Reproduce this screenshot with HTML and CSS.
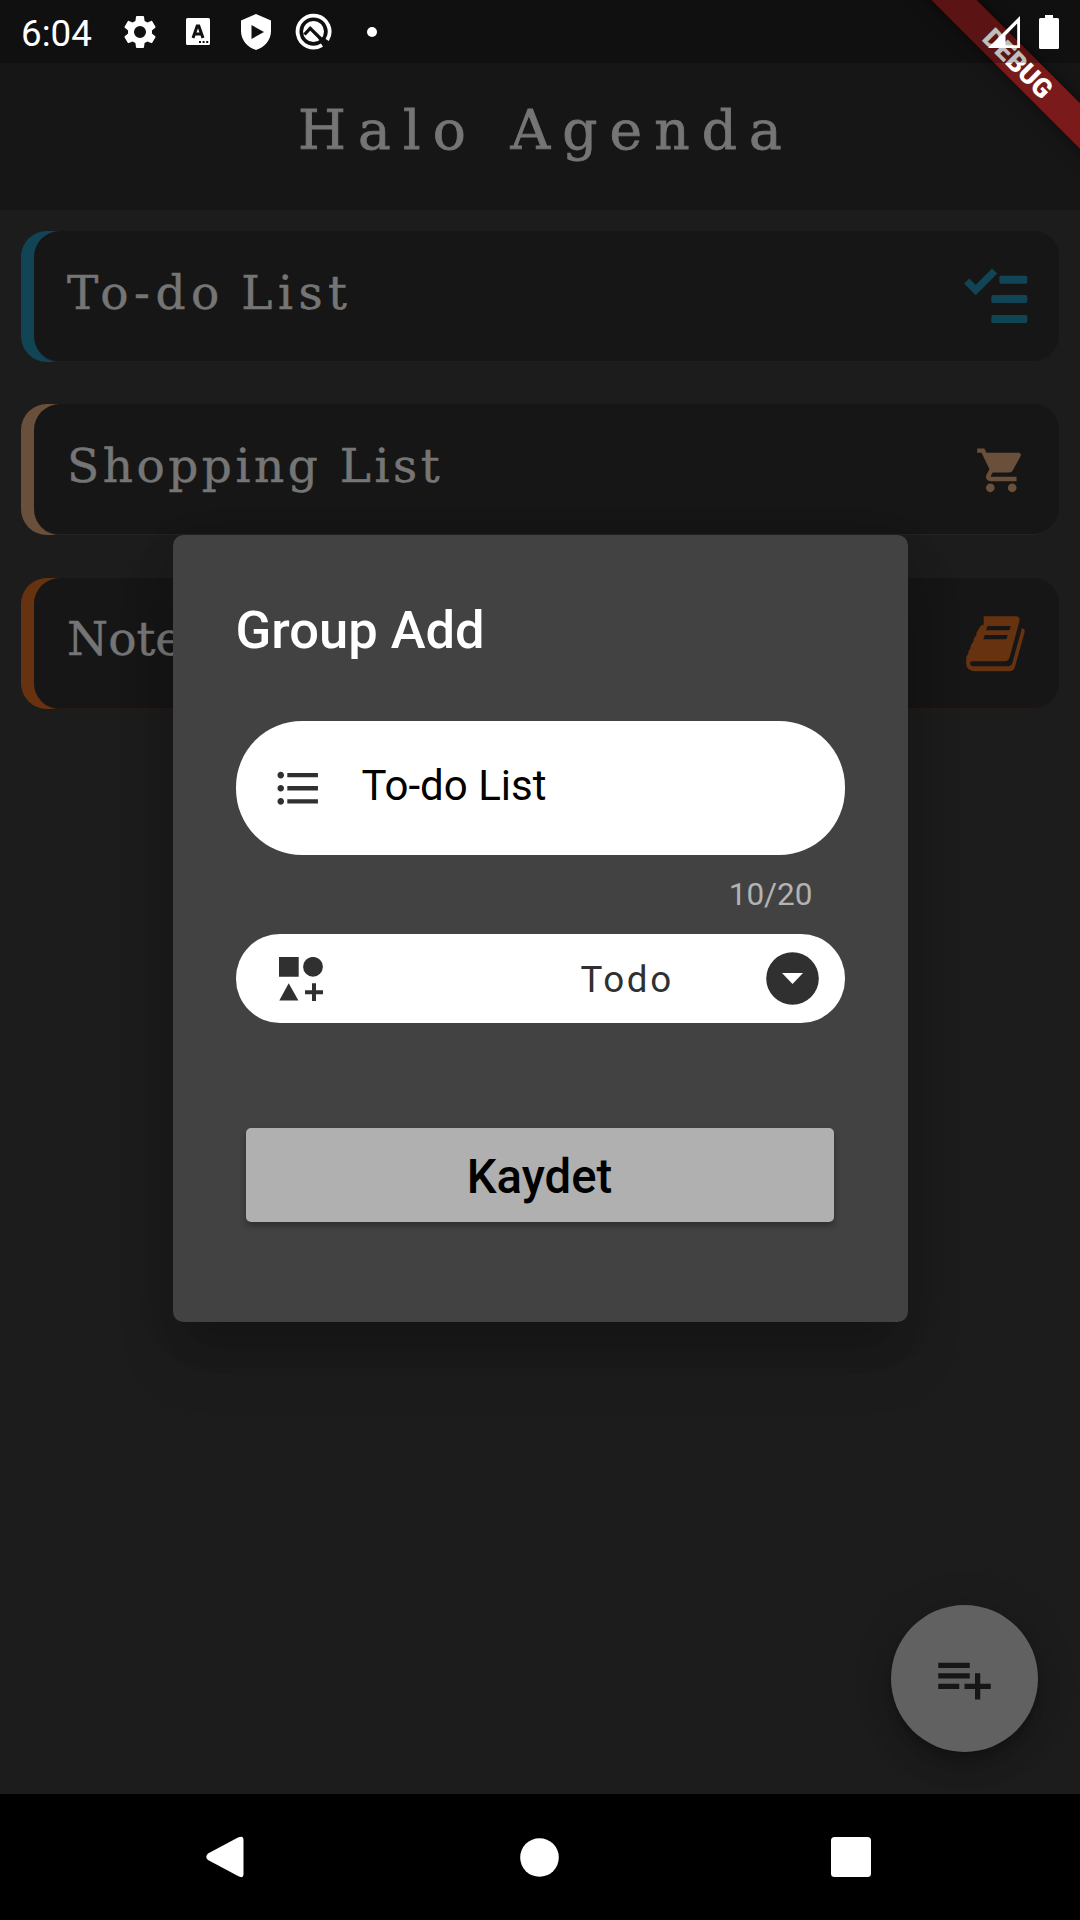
FILE: index.html
```html
<!DOCTYPE html>
<html lang="en">
<head>
<meta charset="utf-8">
<title>Halo Agenda</title>
<link rel="stylesheet" href="styles.css">
</head>
<body>
<div class="screen">
  <header class="statusbar">
    <span class="clock">6:04</span>
    <svg class="st-gear" width="40" height="40" viewBox="0 0 24 24"><path d="M19.14 12.94c.04-.3.06-.61.06-.94 0-.32-.02-.64-.07-.94l2.03-1.58c.18-.14.23-.41.12-.61l-1.92-3.32c-.12-.22-.37-.29-.59-.22l-2.39.96c-.5-.38-1.03-.7-1.62-.94l-.36-2.54c-.04-.24-.24-.41-.48-.41h-3.84c-.24 0-.43.17-.47.41l-.36 2.54c-.59.24-1.13.57-1.62.94l-2.39-.96c-.22-.08-.47 0-.59.22L2.74 8.87c-.12.21-.08.47.12.61l2.03 1.58c-.05.3-.09.63-.09.94s.02.64.07.94l-2.03 1.58c-.18.14-.23.41-.12.61l1.92 3.32c.12.22.37.29.59.22l2.39-.96c.5.38 1.03.7 1.62.94l.36 2.54c.05.24.24.41.48.41h3.84c.24 0 .44-.17.47-.41l.36-2.54c.59-.24 1.13-.56 1.62-.94l2.39.96c.22.08.47 0 .59-.22l1.92-3.32c.12-.22.07-.47-.12-.61l-2.01-1.58zM12 15.6A3.6 3.6 0 1 1 12 8.4a3.6 3.6 0 0 1 0 7.2z"/></svg>
    <svg class="st-kbd" width="24" height="27" viewBox="0 0 24 27"><rect width="24" height="27" rx="1.5"/><path d="M7 20 11.200 8h1.600L17 20M8.500 16h7" fill="none" stroke="#101010" stroke-width="3"/><path d="M13 23h2v2h-2zM16.600 23h2v2h-2zM20.200 23h2v2h-2z" fill="#101010"/></svg>
    <svg class="st-shield" width="30" height="36" viewBox="0 0 30 36"><path fill-rule="evenodd" d="M15 0 30 6.500V17c0 9-6.500 16.500-15 19C6.500 33.500 0 26 0 17V6.500zM10.500 11v14L23 18z"/></svg>
    <svg class="st-q" width="37" height="37" viewBox="0 0 37 37"><path d="M27 32.200A16 16 0 1 1 32.200 27" fill="none" stroke="#fff" stroke-width="3.800"/><circle cx="18.500" cy="18.500" r="10.500"/><path d="M9.500 21.500 15.200 15.300 27 27" fill="none" stroke="#101010" stroke-width="3.200"/><path d="M24 24.500 31 31.500" stroke="#101010" stroke-width="3"/></svg>
    <svg class="st-dot" width="10" height="10" viewBox="0 0 10 10"><circle cx="5" cy="5" r="5"/></svg>
    <svg class="st-signal" width="32" height="32" viewBox="0 0 32 32"><path fill-rule="evenodd" d="M32 0V32H0zM29.200 7.500 17.500 19.500V29.200H29.200z"/></svg>
    <svg class="st-battery" width="20" height="34" viewBox="0 0 20 34"><path d="M6 0h8v3h4.500A1.500 1.500 0 0 1 20 4.500v28a1.500 1.500 0 0 1-1.500 1.500h-17A1.500 1.500 0 0 1 0 32.500v-28A1.500 1.500 0 0 1 1.500 3H6z"/></svg>
  </header>
  <div class="appbar"><h1 class="app-title">Halo Agenda</h1></div>
  <main class="groups">
    <section class="card card-todo"><div class="card-body">
      <span class="card-label label-todo">To-do List</span>
      <svg class="card-icon" width="63.300" height="55.300" viewBox="104 174 190 166"><path d="M112 213 139 240 196 183" fill="none" stroke="#114556" stroke-width="22"/><rect x="210" y="197" width="84" height="24" rx="5"/><rect x="186" y="255" width="108" height="24" rx="5"/><rect x="186" y="315" width="108" height="24" rx="5"/></svg>
    </div></section>
    <section class="card card-shop"><div class="card-body">
      <span class="card-label label-shop">Shopping List</span>
      <svg class="card-icon" width="52.500" height="52.500" viewBox="0 0 24 24"><path d="M7 18c-1.100 0-1.990.9-1.990 2S5.900 22 7 22s2-.9 2-2-.9-2-2-2zM1 2v2h2l3.600 7.590-1.350 2.450c-.16.28-.25.61-.25.960 0 1.100.9 2 2 2h12v-2H7.420c-.14 0-.25-.11-.25-.25l.03-.12.9-1.630h7.450c.75 0 1.410-.41 1.750-1.030l3.580-6.490c.08-.14.12-.31.12-.48 0-.55-.45-1-1-1H5.210l-.94-2H1zm16 16c-1.100 0-1.990.9-1.990 2s.89 2 1.990 2 2-.9 2-2-.9-2-2-2z"/></svg>
    </div></section>
    <section class="card card-notes"><div class="card-body">
      <span class="card-label label-notes">Notes</span>
      <svg class="card-icon" width="58.700" height="55.300" viewBox="107 1220 176 166"><path fill-rule="evenodd" d="M160 1221h96q14 0 11 16l-29 107q-3 12-16 12h-95q-8 0-8 7 1 8 13 8h101q10 0 13-10l27-98q3-10 1-8 11 4 9 14l-29 103q-4 14-18 14H136q-28 0-29-26l1-18 5-8 2-9 5-8 2-10 7-10 2-10 7-9 1-9 6-9q5-14 15-14zM175 1250q-5 0-6 6l-1 7h66q4 0 5-5l2-8zM166 1277q-4 0-5 5l-2 8h65q5 0 6-5l2-8z"/></svg>
    </div></section>
  </main>
  <footer class="navbar">
    <svg width="38" height="44" viewBox="0 0 38 44"><path d="M2 18.500 32 2.500Q37.500 0 37.500 5V39Q37.500 44 32 41L2 25Q-1.500 22 2 18.500z"/></svg>
    <svg class="nav-home" width="39" height="39" viewBox="0 0 39 39"><circle cx="19.500" cy="19.500" r="19.300"/></svg>
    <svg width="40" height="40" viewBox="0 0 40 40"><rect width="40" height="40" rx="3.500"/></svg>
  </footer>

  <button class="fab" aria-label="Add group"><svg width="63" height="63" viewBox="0 0 24 24"><path d="M14 10H2v2h12v-2zm0-4H2v2h12V6zm4 8v-4h-2v4h-4v2h4v4h2v-4h4v-2h-4zM2 16h8v-2H2v2z"/></svg></button>

  <div class="overlay">
    <div class="dialog" role="dialog">
      <h2 class="dialog-title">Group Add</h2>
      <div class="name-field">
        <svg width="52.500" height="52.500" viewBox="0 0 24 24"><path d="M4 10.500c-.83 0-1.500.67-1.500 1.500s.67 1.500 1.500 1.500 1.500-.67 1.500-1.500-.67-1.500-1.500-1.500zm0-6c-.83 0-1.500.67-1.500 1.500S3.170 7.500 4 7.500 5.500 6.830 5.500 6 4.830 4.500 4 4.500zm0 12c-.83 0-1.500.68-1.500 1.500s.68 1.500 1.500 1.500 1.500-.68 1.500-1.500-.67-1.500-1.500-1.500zM7 19h14v-2H7v2zm0-6h14v-2H7v2zm0-8v2h14V5H7z"/></svg>
        <span class="name-value">To-do List</span>
      </div>
      <div class="counter">10/20</div>
      <div class="type-field">
        <svg width="44" height="44" viewBox="0 0 44 44"><path d="M0 0h19.700v19.700H0zM9.700 26.300 19.400 43.500H.3zM33 26.300h4v7h7v4h-7v6.700h-4v-6.700h-7v-4h7z"/><circle cx="34" cy="9.800" r="9.900"/></svg>
        <span class="type-value">Todo</span>
        <svg class="caret" width="53" height="53" viewBox="0 0 53 53"><circle cx="26.500" cy="26.500" r="26.300"/><path d="M16 21h21L26.500 32z" fill="#fff"/></svg>
      </div>
      <button class="save">Kaydet</button>
    </div>
  </div>

  <div class="debug"><span class="ribbon">DEBUG</span></div>
</div>
</body>
</html>
```
FILE: styles.css
```css
* { box-sizing: border-box; }
body { margin: 0; background: #1c1c1c; font-family: Roboto, "Liberation Sans", sans-serif; }
svg { display: block; flex: none; }
button { border: 0; padding: 0; font-family: inherit; }

.screen { position: relative; width: 1080px; height: 1920px; overflow: hidden; display: flex; flex-direction: column; background: linear-gradient(#161616 63px, #1c1c1c 63px); }

/* Status bar: the tint lies over the ribbon, the icons over both */
.statusbar { position: relative; z-index: 3; height: 63px; padding: 0 21px; display: flex; align-items: center; color: #fff; fill: #fff; background: rgba(0, 0, 0, .25); }
.clock { width: 99px; font-size: 36.750px; line-height: 63px; padding-top: 3px; }
.st-kbd { margin-left: 26px; }
.st-shield { margin-left: 31px; }
.st-q { margin-left: 24px; }
.st-dot { margin-left: 35px; }
.st-signal { margin-left: auto; }
.st-battery { margin-left: 19px; }

.appbar { height: 147px; background: #161616; display: flex; align-items: center; justify-content: center; padding-bottom: 14px; }
.app-title { margin: 0; font: 400 55px "DejaVu Serif", serif; letter-spacing: 12.100px; word-spacing: 3px; margin-right: -12px; color: #757575; -webkit-text-stroke: .8px #757575; }

.groups { flex: 1; padding: 21px; display: flex; flex-direction: column; gap: 42.300px; background: #1c1c1c; }
.card { height: 131px; flex: none; padding-left: 13px; border-radius: 26px; background: linear-gradient(90deg, var(--tone) 60px, #161616 60px); }
.card-body { height: 131px; border-radius: 26px; background: #161616; display: flex; align-items: center; justify-content: space-between; padding: 0 31.500px 0 33px; box-shadow: inset 0 -1px var(--edge); fill: var(--tone); }
.card-todo { --tone: #114556; --edge: #162326; }
.card-shop { --tone: #6a503a; --edge: #252321; }
.card-notes { --tone: #663210; --edge: #251a15; }
.card-notes .card-body { padding-right: 34.500px; }
.card-todo .card-icon { margin-bottom: 2px; }
.card-notes .card-icon { margin-top: 2px; }
.card-label { font: 400 47px "DejaVu Serif", serif; color: #757575; padding-bottom: 9px; white-space: nowrap; -webkit-text-stroke: .5px #757575; }
.label-todo { letter-spacing: 5.500px; word-spacing: -4px; }
.label-shop { letter-spacing: 3.500px; }
.label-notes { letter-spacing: 0; }

.navbar { height: 126px; background: #000; fill: #fff; display: flex; align-items: center; justify-content: space-between; padding: 0 209px 0 206px; }
.nav-home { margin-left: 4px; }

.fab { position: absolute; left: 891px; top: 1605px; width: 147px; height: 147px; border-radius: 50%; background: #616161; fill: #161616; display: flex; align-items: center; justify-content: center; box-shadow: 0 9px 13px -3px rgba(0,0,0,.2), 0 15px 26px rgba(0,0,0,.14), 0 3px 45px rgba(0,0,0,.1); }

.overlay { position: absolute; inset: 63px 0 126px; display: flex; align-items: center; justify-content: center; }
.dialog { width: 735px; height: 787px; border-radius: 10.500px; background: #424242; padding: 64px 63px 62px; display: flex; flex-direction: column; box-shadow: 0 29px 39px -18px rgba(0,0,0,.2), 0 40px 60px 0 rgba(0,0,0,.12), 0 10px 50px 0 rgba(0,0,0,.06); }
.dialog-title { margin: 0 0 59px; font-size: 52.500px; line-height: 63px; font-weight: 500; color: #fff; }
.name-field { height: 134px; border-radius: 66px; background: #fff; fill: #303030; display: flex; align-items: center; padding-left: 36.500px; }
.name-value { margin-left: 37px; padding-bottom: 5px; font-size: 42px; color: #000; }
.counter { height: 79px; line-height: 79px; padding-right: 32px; text-align: right; font-size: 31.500px; color: #b3b3b3; }
.type-field { height: 89px; border-radius: 44px; background: #fff; fill: #303030; display: flex; align-items: center; padding: 0 26px 0 43.500px; }
.type-value { margin-left: auto; width: 185px; padding-top: 2px; font-size: 36.750px; letter-spacing: 2.600px; color: #303030; }
.save { margin: 105px 11px 0 10px; height: 94px; padding-top: 3px; border-radius: 5px; background: #b0b0b0; font-size: 47.250px; font-weight: 500; color: #000; box-shadow: 0 4px 6px rgba(0,0,0,.3); }

.debug { position: absolute; z-index: 2; top: 0; right: 0; width: 200px; height: 210px; overflow: hidden; }
.ribbon { position: absolute; left: -63px; top: 46.500px; width: 400px; height: 32px; padding-left: 2px; transform: rotate(45deg); background: rgba(183, 28, 28, .627); box-shadow: 0 0 16px rgba(0,0,0,.5); color: #fff; font-size: 26.800px; font-weight: 900; line-height: 33px; text-align: center; }
```
